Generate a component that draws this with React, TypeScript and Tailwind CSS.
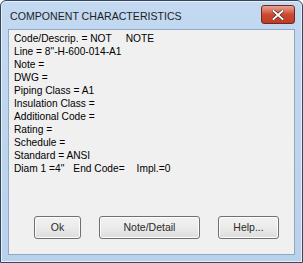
import React from 'react'

const lines = [
    'Code/Descrip. = NOT     NOTE',
    'Line = 8"-H-600-014-A1',
    'Note =',
    'DWG =',
    'Piping Class = A1',
    'Insulation Class =',
    'Additional Code =',
    'Rating =',
    'Schedule =',
    'Standard = ANSI',
]

function Btn({ label, w }: { label: string; w: string }) {
    return (
        <button
            className={`${w} h-[23px] rounded-[3px] border border-[#707070] bg-gradient-to-b from-[#f2f2f2] via-[#ebebeb] to-[#dddddd] text-[10.5px] text-[#2a2a2a] shadow-[inset_0_0_0_1px_#fcfcfc]`}
        >
            {label}
        </button>
    )
}

export default function App() {
    return (
        <div
            className="w-[303px] h-[263px] bg-white"
            style={{ fontFamily: '"Liberation Sans", Arial, sans-serif' }}
        >
            <div className="w-[303px] h-[263px] flex flex-col border border-[#34465c] rounded-t-[6px] bg-gradient-to-b from-[#c2d9f1] to-[#b9d1ea] shadow-[inset_0_0_0_1px_#e6f0fa]">
                <div className="h-[28px] flex items-start justify-between pl-[9px] pr-[7px]">
                    <span className="mt-[9px] text-[10.6px] leading-[12px] text-[#1e1e1e]">COMPONENT CHARACTERISTICS</span>
                    <div className="mt-[4px] w-[34px] h-[19px] rounded-[3px] border border-[#6d2a22] bg-gradient-to-b from-[#e8a493] via-[#cc4a32] to-[#c23b22] flex items-center justify-center">
                        <svg width="12" height="10" viewBox="0 0 12 10">
                            <path d="M1.5 1 L10.5 9 M10.5 1 L1.5 9" stroke="#4a1a12" strokeWidth="3.2" strokeLinecap="square" />
                            <path d="M1.5 1 L10.5 9 M10.5 1 L1.5 9" stroke="#ffffff" strokeWidth="2" strokeLinecap="square" />
                        </svg>
                    </div>
                </div>
                <div className="flex-1 mx-[7px] mb-[7px] border border-[#8fa8c6] bg-[#f0f0f0] flex flex-col">
                    <div className="pl-[5px] pt-[2px] text-[10.2px] leading-[13px] text-black">
                        {lines.map((l) => (
                            <div key={l} className="whitespace-pre">{l}</div>
                        ))}
                        <div className="flex whitespace-pre">
                            <span>Diam 1 =4"</span>
                            <span className="ml-[9px]">End Code=</span>
                            <span className="ml-[12px]">Impl.=0</span>
                        </div>
                    </div>
                    <div className="mt-auto mb-[15px] flex pl-[25px]">
                        <Btn label="Ok" w="w-[47px]" />
                        <div className="w-[18px]" />
                        <Btn label="Note/Detail" w="w-[101px]" />
                        <div className="w-[18px]" />
                        <Btn label="Help..." w="w-[61px]" />
                    </div>
                </div>
            </div>
        </div>
    )
}
